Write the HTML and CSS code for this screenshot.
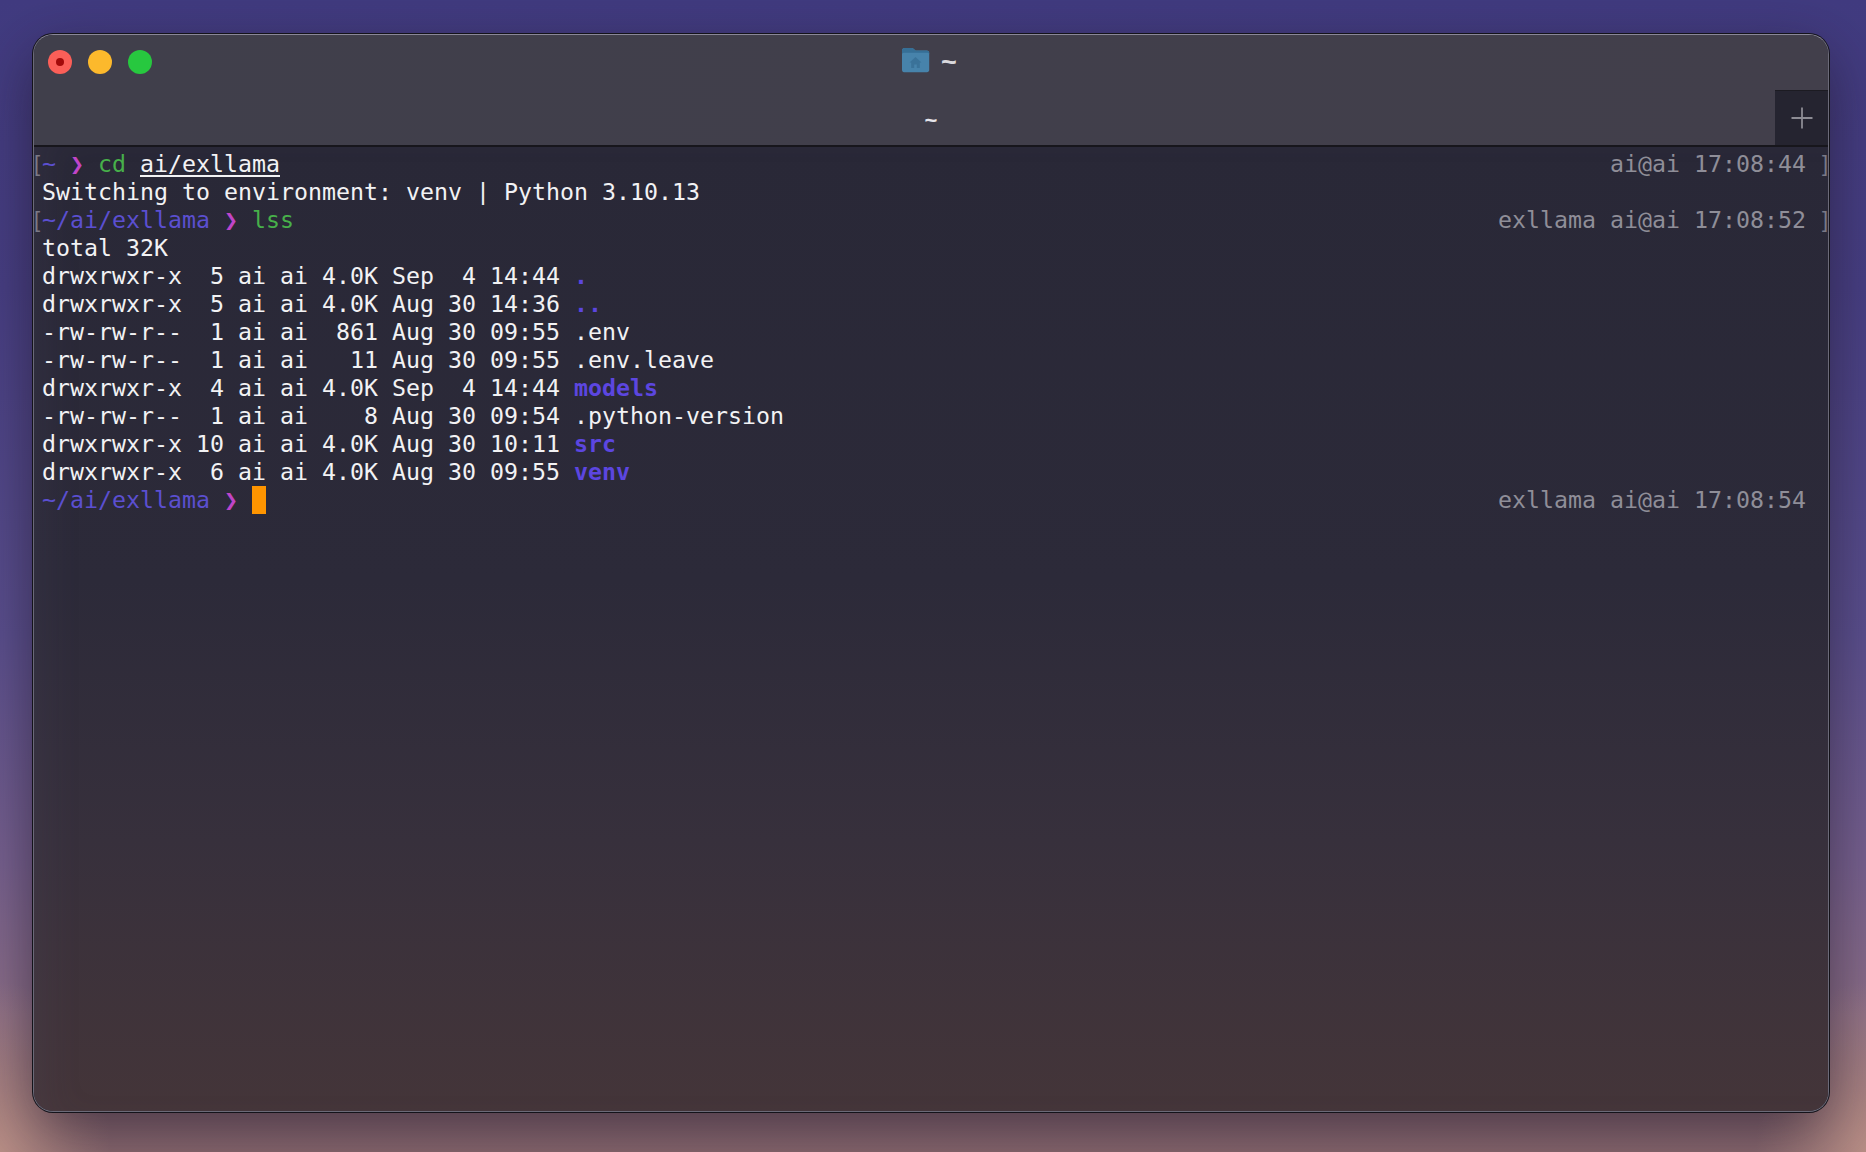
FILE: index.html
```html
<!DOCTYPE html>
<html lang="en">
<head>
<meta charset="utf-8">
<title>~</title>
<link rel="stylesheet" href="styles.css">
</head>
<body>
<main class="window">
  <header class="titlebar">
    <div class="lights">
      <span class="light red"></span>
      <span class="light yellow"></span>
      <span class="light green"></span>
    </div>
    <div class="title">
      <svg class="folder" viewBox="0 0 29 26" width="29" height="26" aria-hidden="true">
        <path d="M1 3.500C1 2 2 1 3.500 1h7c1 0 1.700.4 2.400 1.100L14.500 3.500H26c1.200 0 2.200 1 2.200 2.200V23c0 1.300-1 2.200-2.200 2.200H3c-1.200 0-2-1-2-2.200Z" fill="#4783ab"/>
        <path d="M1 7.500c0-1 .8-1.700 1.700-1.700H26.500c1 0 1.700.7 1.700 1.700V6c0-1.300-1-2.300-2.200-2.300H14.500L12.900 2.100C12.200 1.400 11.500 1 10.500 1h-7C2 1 1 2 1 3.500Z" fill="#366f96"/>
        <path d="M14.500 10l-6 5.500h1.700v5.500h3v-3.500h2.600V21h3v-5.500h1.700Z" fill="#3a7299"/>
      </svg>
      <span class="title-text">~</span>
    </div>
    <div class="tabs">
      <div class="tab">~</div>
      <div class="new-tab">
        <svg viewBox="0 0 22 22" width="22" height="22" aria-hidden="true">
          <path d="M11 0.500V21.500M0.500 11H21.500" stroke="#8d8c94" stroke-width="1.800" fill="none"/>
        </svg>
      </div>
    </div>
  </header>
  <section class="term">
    <div class="line"><span class="left"><i class="mark">[</i><span class="path">~</span> <span class="arrow">❯</span> <span class="cmd">cd</span> <span class="arg">ai/exllama</span></span><span class="right">ai@ai 17:08:44<i class="endmark">]</i></span></div>
    <div class="line"><span class="left">Switching to environment: venv | Python 3.10.13</span></div>
    <div class="line"><span class="left"><i class="mark">[</i><span class="path">~/ai/exllama</span> <span class="arrow">❯</span> <span class="cmd">lss</span></span><span class="right">exllama ai@ai 17:08:52<i class="endmark">]</i></span></div>
    <div class="line"><span class="left">total 32K</span></div>
    <div class="line"><span class="left">drwxrwxr-x  5 ai ai 4.0K Sep  4 14:44 <b class="dir">.</b></span></div>
    <div class="line"><span class="left">drwxrwxr-x  5 ai ai 4.0K Aug 30 14:36 <b class="dir">..</b></span></div>
    <div class="line"><span class="left">-rw-rw-r--  1 ai ai  861 Aug 30 09:55 .env</span></div>
    <div class="line"><span class="left">-rw-rw-r--  1 ai ai   11 Aug 30 09:55 .env.leave</span></div>
    <div class="line"><span class="left">drwxrwxr-x  4 ai ai 4.0K Sep  4 14:44 <b class="dir">models</b></span></div>
    <div class="line"><span class="left">-rw-rw-r--  1 ai ai    8 Aug 30 09:54 .python-version</span></div>
    <div class="line"><span class="left">drwxrwxr-x 10 ai ai 4.0K Aug 30 10:11 <b class="dir">src</b></span></div>
    <div class="line"><span class="left">drwxrwxr-x  6 ai ai 4.0K Aug 30 09:55 <b class="dir">venv</b></span></div>
    <div class="line"><span class="left"><span class="path">~/ai/exllama</span> <span class="arrow">❯</span> <span class="cursor"></span></span><span class="right">exllama ai@ai 17:08:54</span></div>
  </section>
</main>
</body>
</html>
```
FILE: styles.css
```css
* { box-sizing: border-box; }
html, body { height: 100%; }
body {
  margin: 0;
  padding: 34px 37px 40px 33px;
  overflow: hidden;
  background:
    radial-gradient(110px 170px at 0 100%, #b88e86 0, rgba(184,142,134,0) 100%),
    radial-gradient(110px 170px at 100% 100%, #b88e86 0, rgba(184,142,134,0) 100%),
    linear-gradient(180deg, #413b80 0, #473f84 25%, #5a4f8e 55%, #77618f 75%, #8c6f88 88%, #8e6c72 100%);
}
.window {
  height: 1078px;
  border-radius: 20px;
  overflow: hidden;
  display: flex;
  flex-direction: column;
  box-shadow: 0 0 0 1px #14131a, 0 20px 60px rgba(30, 20, 35, .6);
  border: 1px solid #6b6a78;
  border-top-color: #8a8898;
  background: #2a2838;
}
.titlebar {
  flex: 0 0 auto;
  height: 112px;
  position: relative;
  display: flex;
  flex-direction: column;
  background: linear-gradient(90deg, #403f4b, #423f4b);
  border-bottom: 2px solid #17161c;
}
.lights {
  position: absolute;
  left: 14px;
  top: 15px;
  display: flex;
  gap: 16px;
}
.light {
  width: 24px;
  height: 24px;
  border-radius: 50%;
  display: flex;
  align-items: center;
  justify-content: center;
}
.red { background: #fb5f58; }
.red::after {
  content: "";
  width: 8px;
  height: 8px;
  border-radius: 50%;
  background: #a30a0a;
}
.yellow { background: #fcb92c; }
.green { background: #27c83f; }
.title {
  height: 55px;
  display: flex;
  align-items: center;
  justify-content: center;
  gap: 11px;
  padding-right: 4px;
  color: #d9d8dd;
  font: 700 27px "Liberation Sans", sans-serif;
}
.folder {
  flex: none;
  margin-bottom: 5px;
}
.tabs {
  flex: 1;
  display: flex;
  padding-left: 53px;
}
.tab {
  flex: 1;
  display: flex;
  align-items: center;
  justify-content: center;
  padding-top: 6px;
  color: #e6e5ea;
  font: 700 22px "Liberation Sans", sans-serif;
}
.new-tab {
  width: 53px;
  background: #252430;
  border-top: 1px solid #1c1b22;
  display: flex;
  align-items: center;
  justify-content: center;
}
.term {
  flex: 1;
  padding: 3px 0 0 8px;
  background: linear-gradient(180deg, #292837 0, #2c2a39 45%, #37303c 72%, #443539 100%);
  box-shadow: inset 30px 0 40px -20px rgba(120, 110, 150, .1);
  color: #f2f2f4;
  font: 400 23.25px/28px "DejaVu Sans Mono", "Liberation Mono", monospace;
}
.line {
  height: 28px;
  display: flex;
  justify-content: space-between;
  white-space: pre;
}
.left { position: relative; }
.right {
  position: relative;
  padding-right: 22px;
  color: #8f8e98;
}
.mark, .endmark {
  position: absolute;
  top: 0;
  font: 400 22px/28px "Liberation Sans", sans-serif;
  color: #7a7986;
}
.mark { left: -8px; }
.endmark { right: 0; }
.path { color: #5b4fd0; }
.arrow { color: #c045c8; }
.cmd { color: #47b04a; }
.arg { text-decoration: underline; text-underline-offset: 3px; text-decoration-thickness: 2px; }
.dir { color: #5c46e0; font-weight: 700; }
.cursor {
  display: inline-block;
  width: 14px;
  height: 28px;
  vertical-align: top;
  background: #ff9500;
}
```
